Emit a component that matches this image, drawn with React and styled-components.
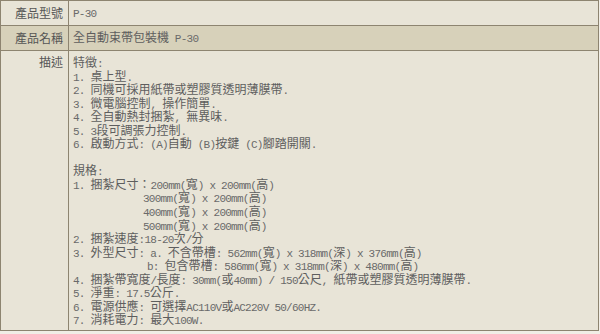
import React from "react";
import styled, { createGlobalStyle } from "styled-components";

const Global = createGlobalStyle`
  html, body { margin: 0; padding: 0; background: #f1eee6; }
  body { font-family: "Noto Sans CJK TC", sans-serif; }
`;

const Table = styled.table`
  width: 599px;
  border-collapse: collapse;
  border: 1px solid #5d5541;
  font-size: 12px;
  color: #5e5e5e;
`;

const Row = styled.tr`
  background: ${(p) => (p.$shade ? "#d7d1ba" : "#e8e4d7")};
`;

const Label = styled.td`
  width: 58px;
  padding: 0 5px 0 4px;
  text-align: right;
  vertical-align: ${(p) => (p.$top ? "top" : "middle")};
  padding-top: ${(p) => (p.$top ? "4px" : "0")};
  border: 1px solid #8d8470;
  color: #555;
  height: ${(p) => p.$h || "auto"};
  line-height: 14px;
`;

const Value = styled.td`
  padding: 0 4px;
  vertical-align: ${(p) => (p.$top ? "top" : "middle")};
  padding-top: ${(p) => (p.$top ? "4px" : "0")};
  border: 1px solid #8d8470;
  height: ${(p) => p.$h || "auto"};
  line-height: 14px;
`;

const Lines = styled.div`
  white-space: pre;
`;

const Line = styled.div`
  padding-left: ${(p) => p.$indent || 0}px;
  height: 13.55px;
  line-height: 13.55px;
`;

const Lat = styled.span`
  font-family: "Liberation Mono", monospace;
  font-size: 11px;
  letter-spacing: -0.75px;
  color: #6a6a6a;
`;

function Txt({ children }) {
  const parts = String(children).split(/([\x20-\x7e]+)/);
  return parts.map((p, i) =>
    i % 2 === 1 ? <Lat key={i}>{p}</Lat> : p ? <React.Fragment key={i}>{p}</React.Fragment> : null
  );
}

const lines = [
  ["特徵:"],
  ["1. 桌上型."],
  ["2. 同機可採用紙帶或塑膠質透明薄膜帶."],
  ["3. 微電腦控制, 操作簡單."],
  ["4. 全自動熱封捆紮, 無異味."],
  ["5. 3段可調張力控制."],
  ["6. 啟動方式: (A)自動 (B)按鍵 (C)腳踏開關."],
  [""],
  ["規格:"],
  ["1. 捆紮尺寸：200mm(寬) x 200mm(高)"],
  ["300mm(寬) x 200mm(高)", 70],
  ["400mm(寬) x 200mm(高)", 70],
  ["500mm(寬) x 200mm(高)", 70],
  ["2. 捆紮速度:18-20次/分"],
  ["3. 外型尺寸: a. 不含帶槽: 562mm(寬) x 318mm(深) x 376mm(高)"],
  ["b: 包含帶槽: 586mm(寬) x 318mm(深) x 480mm(高)", 74],
  ["4. 捆紮帶寬度/長度: 30mm(或40mm) / 150公尺, 紙帶或塑膠質透明薄膜帶."],
  ["5. 淨重: 17.5公斤."],
  ["6. 電源供應: 可選擇AC110V或AC220V 50/60HZ."],
  ["7. 消耗電力: 最大100W."],
];

export default function App() {
  return (
    <>
      <Global />
      <Table>
        <tbody>
          <Row>
            <Label $h="24px">產品型號</Label>
            <Value $h="24px"><Txt>P-30</Txt></Value>
          </Row>
          <Row $shade>
            <Label $h="24px">產品名稱</Label>
            <Value $h="24px"><Txt>全自動束帶包裝機 P-30</Txt></Value>
          </Row>
          <Row>
            <Label $top $h="275px">描述</Label>
            <Value $top $h="275px">
              <Lines>
                {lines.map(([t, ind], i) => (
                  <Line key={i} $indent={ind}>
                    <Txt>{t}</Txt>
                  </Line>
                ))}
              </Lines>
            </Value>
          </Row>
        </tbody>
      </Table>
    </>
  );
}
